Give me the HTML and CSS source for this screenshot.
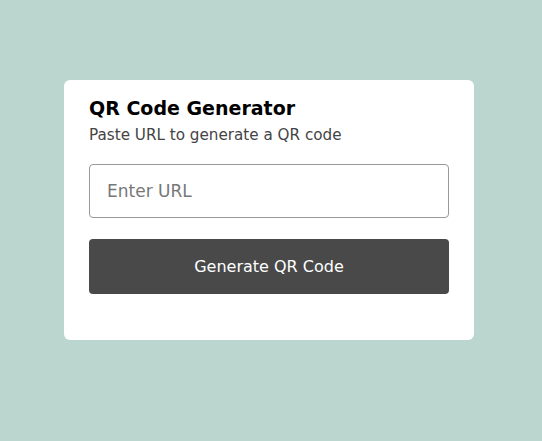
FILE: index.html
```html
<!DOCTYPE html>
<html>
<head>
<meta charset="utf-8">
<link rel="stylesheet" href="styles.css">
</head>
<body>
<div class="card">
  <h1 class="title">QR Code Generator</h1>
  <p class="subtitle">Paste URL to generate a QR code</p>
  <input class="url" type="text" placeholder="Enter URL">
  <button class="btn">Generate QR Code</button>
</div>
</body>
</html>
```
FILE: styles.css
```css
html, body {
  margin: 0;
  height: 100%;
}
body {
  background: #bad6cf;
  font-family: "DejaVu Sans", "Noto Sans", sans-serif;
  padding: 80px 0 0 64px;
  box-sizing: border-box;
}
.card {
  width: 410px;
  height: 260px;
  box-sizing: border-box;
  background: #fff;
  border-radius: 6px;
  padding: 16px 25px 0 25px;
  display: flex;
  flex-direction: column;
}
.title {
  margin: 0;
  font-size: 19px;
  font-weight: 700;
  line-height: 24px;
  color: #000;
}
.subtitle {
  margin: 5px 0 0;
  font-size: 15.2px;
  line-height: 20px;
  color: #444;
}
.url {
  margin-top: 19px;
  height: 54px;
  box-sizing: border-box;
  width: 360px;
  border: 1px solid #999;
  border-radius: 4px;
  padding: 0 17px;
  font-family: inherit;
  font-size: 17px;
  color: #333;
  outline: none;
}
.url::placeholder {
  color: #777;
}
.btn {
  margin-top: 21px;
  height: 55px;
  width: 360px;
  border: none;
  border-radius: 4px;
  background: #494949;
  color: #fff;
  font-family: inherit;
  font-size: 16px;
}
```
